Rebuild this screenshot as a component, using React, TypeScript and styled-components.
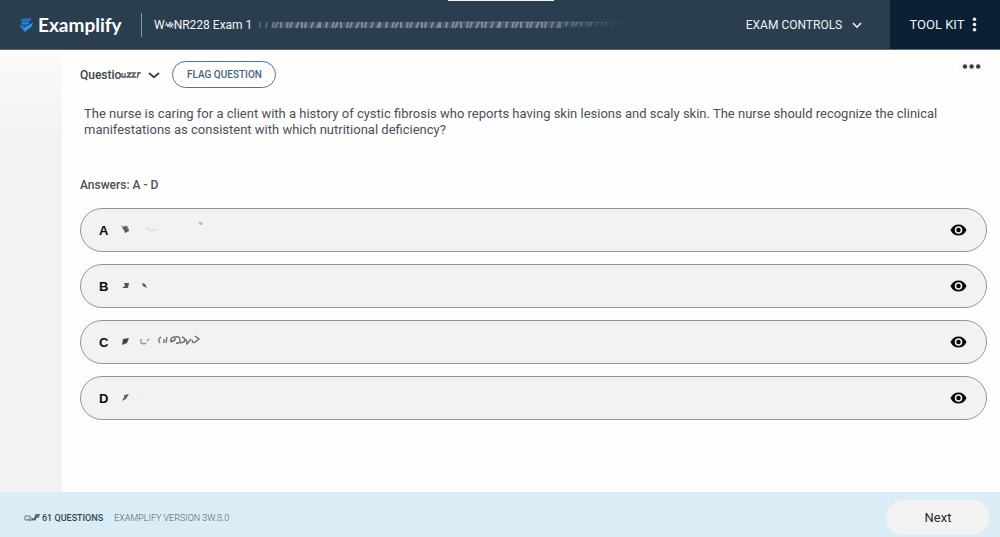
import React from "react";
import styled, { createGlobalStyle } from "styled-components";

const GlobalStyle = createGlobalStyle`
  * { box-sizing: border-box; }
  body { margin: 0; background: #fefefe; font-family: Roboto, "Liberation Sans", sans-serif; color: #4a5058; }
  button { font-family: inherit; cursor: pointer; }
`;

const Page = styled.div`
  display: flex;
  flex-direction: column;
  min-height: 100vh;
`;

const Header = styled.header`
  position: relative;
  display: flex;
  align-items: stretch;
  height: 50px;
  background: #2b3e4f;
  border-bottom: 1px solid #5a6772;
  color: #f2f5f7;
`;

const WindowHandle = styled.span`
  position: absolute;
  top: 0;
  left: 50%;
  width: 106px;
  height: 1px;
  margin-left: -52px;
  background: #f4f6f7;
`;

const Brand = styled.div`
  display: flex;
  align-items: center;
  padding-left: 19px;
  width: 141px;
  gap: 4px;
`;

const BrandName = styled.span`
  font-family: Lato, sans-serif;
  font-size: 19px;
  line-height: 24px;
  font-weight: 700;
  color: #ffffff;
`;

const Divider = styled.span`
  align-self: center;
  width: 1px;
  height: 24px;
  background: #8996a1;
`;

const ExamTitle = styled.h1`
  display: flex;
  align-items: center;
  flex: 1;
  min-width: 0;
  margin: 0;
  padding-left: 12px;
  font-size: 12px;
  font-weight: 400;
  white-space: nowrap;
  overflow: hidden;
`;

const HeaderButton = styled.button<{ $dark?: boolean }>`
  display: flex;
  align-items: center;
  justify-content: center;
  gap: ${(p) => (p.$dark ? 8 : 10)}px;
  width: ${(p) => (p.$dark ? 110 : 172)}px;
  padding: ${(p) => (p.$dark ? "0 3px 0 0" : "0")};
  border: 0;
  background: ${(p) => (p.$dark ? "#0a2037" : "transparent")};
  color: #eef2f5;
  font-size: ${(p) => (p.$dark ? 13 : 12)}px;
`;

const Body = styled.div`
  display: flex;
  flex: 1;
`;

const Sidebar = styled.aside`
  width: 62px;
  flex-shrink: 0;
  background: linear-gradient(#fbfbfb, #f2f2f2 90px);
`;

const Main = styled.main`
  flex: 1;
  min-width: 0;
  padding: 11px 13px 24px 18px;
`;

const Toolbar = styled.div`
  display: flex;
  align-items: center;
  height: 27px;
`;

const QuestionButton = styled.button`
  display: flex;
  align-items: center;
  padding: 0;
  margin-right: 12px;
  border: 0;
  background: none;
  color: #3d434b;
  font-size: 12px;
  font-weight: 500;
`;

const ChevronGap = styled.span`
  display: flex;
  margin-left: 6px;
`;

const FlagButton = styled.button`
  width: 104px;
  height: 27px;
  padding: 0;
  border: 1px solid #4c7396;
  border-radius: 14px;
  background: #ffffff;
  color: #426482;
  font-size: 10px;
  font-weight: 500;
  white-space: nowrap;
`;

const MoreButton = styled.button`
  display: flex;
  align-self: flex-start;
  margin-left: auto;
  margin-right: 2px;
  padding: 2px 4px;
  border: 0;
  border-radius: 6px;
  background: #f9fafc;
  color: #3a3f48;
`;

const QuestionText = styled.p`
  margin: 18px 0 0;
  padding: 0 4px;
  font-size: 13px;
  line-height: 16px;
`;

const AnswersHeading = styled.h2`
  margin: 40px 0 16px;
  font-size: 12px;
  line-height: 14px;
  font-weight: 500;
`;

const AnswerList = styled.div`
  display: flex;
  flex-direction: column;
  gap: 12px;
`;

const AnswerRow = styled.div`
  display: flex;
  align-items: center;
  height: 44px;
  padding-right: 19px;
  border: 1px solid #959595;
  border-radius: 22px;
  background: #f2f2f2;
`;

const AnswerLabel = styled.label`
  display: flex;
  align-items: center;
  flex: 1;
  height: 100%;
  padding-left: 18px;
  color: #0c0c0c;
  font-family: "Liberation Sans", sans-serif;
  font-size: 13px;
  font-weight: 700;
  cursor: pointer;
`;

const HiddenRadio = styled.input`
  appearance: none;
  width: 0;
  height: 0;
  margin: 0;
`;

const Letter = styled.span`
  width: 20px;
`;

const IconButton = styled.button`
  display: flex;
  padding: 0;
  border: 0;
  background: none;
  color: #080808;
`;

const Footer = styled.footer`
  display: flex;
  align-items: center;
  min-height: 45px;
  padding: 6px 10px 0 24px;
  background: #daecf5;
  font-size: 9px;
`;

const QuestionCount = styled.span`
  display: flex;
  align-items: center;
  gap: 2px;
  margin-right: 11px;
  color: #344550;
  font-weight: 500;
`;

const Version = styled.span`
  color: #4f5e68;
  font-weight: 300;
`;

const NextButton = styled.button`
  width: 104px;
  height: 35px;
  margin-left: auto;
  border: 0;
  border-radius: 18px;
  background: #f2f2f2;
  color: #25282c;
  font-size: 13px;
`;

const Logo = () => (
  <svg width="15" height="16" viewBox="0 0 15 16" aria-hidden="true">
    <path d="M3 1.500h9.500L11 4H2.200z" fill="#2272c4" />
    <path d="M2.200 4h9L8 9H3.500z" fill="#1d63ae" />
    <path d="M2.500 6.200h7.500" stroke="#3b93e6" />
    <path d="M.3 7.500L5.500 10.500 14.300 5.500 12.500 9.500 5.800 15z" fill="#3298f0" />
    <path d="M.3 7.500L5.500 10.500 5.800 15z" fill="#2583da" />
  </svg>
);

const Chevron = ({ width, weight }: { width: number; weight: number }) => (
  <svg width={width} height="8" viewBox={`0 0 ${width} 8`} fill="none" stroke="currentColor" strokeWidth={weight} aria-hidden="true">
    <path d={`M1 2L${width / 2} 6.200L${width - 1} 2`} />
  </svg>
);

const Dots = ({ vertical }: { vertical?: boolean }) => (
  <svg width={vertical ? 5 : 19} height={vertical ? 15 : 7} fill="currentColor" aria-hidden="true">
    {[0, 1, 2].map((i) =>
      vertical ? <circle key={i} cx="2.5" cy={2.2 + i * 5.3} r="1.8" /> : <circle key={i} cx={3 + i * 6.6} cy="3.5" r="2.2" />
    )}
  </svg>
);

const Eye = () => (
  <svg width="17" height="12" viewBox="0 0 17 12" aria-hidden="true">
    <path d="M.5 6C2 2.400 5 .4 8.500.4S15 2.400 16.500 6C15 9.600 12 11.600 8.500 11.600S2 9.600.5 6z" fill="currentColor" />
    <circle cx="8.500" cy="6" r="3" fill="none" stroke="#f2f2f2" strokeWidth="1.500" />
  </svg>
);

const TitleSmudge = () => (
  <svg width="380" height="14" viewBox="0 0 380 14" aria-hidden="true">
    <defs>
      <linearGradient id="fade" gradientUnits="userSpaceOnUse" x1="0" y1="0" x2="376" y2="0">
        <stop offset="0" stopColor="#a9b6c0" stopOpacity=".2" />
        <stop offset=".1" stopColor="#a9b6c0" stopOpacity=".6" />
        <stop offset=".75" stopColor="#a9b6c0" stopOpacity=".6" />
        <stop offset="1" stopColor="#a9b6c0" stopOpacity="0" />
      </linearGradient>
    </defs>
    <g stroke="url(#fade)" fill="none">
      <path d="M200 4L376 4.500" strokeOpacity=".6" />
      <path
        strokeWidth="2"
        d={Array.from({ length: 72 }, (_, i) => `M${8 + i * 5 + (i % 3)} ${i > 60 ? 8 : 10}l${i % 4}-${i > 60 ? 4 : 6}`).join("")}
      />
      <path strokeWidth="6" strokeOpacity=".3" d="M20 7L340 6.500" />
    </g>
  </svg>
);

const WeekSmudge = () => (
  <svg width="9" height="10" viewBox="0 0 9 10" fill="none" stroke="#dce3e8" aria-hidden="true">
    <path d="M0 5h9M1 2l2 5M3 7l2-5v6M5 2l3 2-2 2 2 2" />
  </svg>
);

const NumberSmudge = () => (
  <svg width="21" height="8" viewBox="0 0 21 8" fill="none" stroke="#5a6067" strokeWidth="1.500" aria-hidden="true">
    <path d="M1 2v4h3V2M6 2h4L6 6h4M11 2h3l-3 4h4M18 1l-2 6M16 2h4" />
  </svg>
);

const CountSmudge = () => (
  <svg width="16" height="9" viewBox="0 0 16 9" fill="none" stroke="#6d7b84" aria-hidden="true">
    <path d="M1 3h5v4H1zM3 6l4 2M7 4v3h4V3" />
    <path d="M11 7l1-5h4M12 4h3M8 6h3" stroke="#44535e" strokeWidth="1.400" />
  </svg>
);

const marks: Record<string, React.ReactNode> = {
  A: (
    <>
      <path d="M3 9q4-4 6-1l1 4-4 2-1-3z" fill="#555" />
      <path d="M2 7l4 1M7 7l2 4" stroke="#999" />
      <path d="M27 9l3 1 2 2 2-1 4-1" stroke="#d2d2d2" fill="none" />
      <path d="M79 3h5l-1 3h-2z" fill="#b1c2ca" />
    </>
  ),
  B: (
    <>
      <path d="M5 8h5l-1 5H3l3-2z" fill="#565656" />
      <path d="M23 8l3 1 2 4-4-2z" fill="#555" />
    </>
  ),
  C: (
    <>
      <path d="M4 8l6-1-2 5-5 2z" fill="#444" />
      <path d="M22 8v4l3 1 2-1M30 8l-2 2" stroke="#929a98" strokeWidth="1.400" fill="none" />
      <path d="M42 6q-4 3-1 6M45 8v4M48 6l-1 6" stroke="#7d8886" strokeWidth="1.600" fill="none" />
      <path d="M52 11q-1-4 3-5M56 5v4l-4 2M57 6q4-1 4 3t-4 3M63 6q4 1 2 5l-4 1M67 8l1 5 4-5M73 9l1 3M76 5l4 3-5 4" stroke="#65706e" strokeWidth="1.400" fill="none" />
    </>
  ),
  D: (
    <>
      <path d="M5 8l5-1-3 5-4 2 2-4z" fill="#666" />
      <path d="M22 10h5" stroke="#e3e3e3" />
    </>
  ),
};

export default function App() {
  return (
    <Page>
      <GlobalStyle />
      <Header>
        <WindowHandle />
        <Brand>
          <Logo />
          <BrandName>Examplify</BrandName>
        </Brand>
        <Divider />
        <ExamTitle>
          <span>W</span>
          <WeekSmudge />
          <span>NR228 Exam 1</span>
          <TitleSmudge />
        </ExamTitle>
        <HeaderButton type="button">
          EXAM CONTROLS
          <Chevron width={10} weight={1.6} />
        </HeaderButton>
        <HeaderButton type="button" $dark>
          TOOL KIT
          <Dots vertical />
        </HeaderButton>
      </Header>
      <Body>
        <Sidebar />
        <Main>
          <Toolbar>
            <QuestionButton type="button">
              Questio
              <NumberSmudge />
              <ChevronGap>
                <Chevron width={12} weight={2} />
              </ChevronGap>
            </QuestionButton>
            <FlagButton type="button">FLAG QUESTION</FlagButton>
            <MoreButton type="button" aria-label="More options">
              <Dots />
            </MoreButton>
          </Toolbar>
          <QuestionText>
            The nurse is caring for a client with a history of cystic fibrosis who reports having skin lesions and scaly
            skin. The nurse should recognize the clinical manifestations as consistent with which nutritional deficiency?
          </QuestionText>
          <AnswersHeading>Answers: A - D</AnswersHeading>
          <AnswerList role="radiogroup" aria-label="Answers">
            {["A", "B", "C", "D"].map((letter) => (
              <AnswerRow key={letter}>
                <AnswerLabel>
                  <HiddenRadio type="radio" name="answer" value={letter} />
                  <Letter>{letter}</Letter>
                  <svg width="90" height="22" viewBox="0 0 90 22" aria-hidden="true">
                    {marks[letter]}
                  </svg>
                </AnswerLabel>
                <IconButton type="button" aria-label={`Hide answer ${letter}`}>
                  <Eye />
                </IconButton>
              </AnswerRow>
            ))}
          </AnswerList>
        </Main>
      </Body>
      <Footer>
        <QuestionCount>
          <CountSmudge />
          61 QUESTIONS
        </QuestionCount>
        <Version>EXAMPLIFY VERSION 3W.8.0</Version>
        <NextButton type="button">Next</NextButton>
      </Footer>
    </Page>
  );
}
